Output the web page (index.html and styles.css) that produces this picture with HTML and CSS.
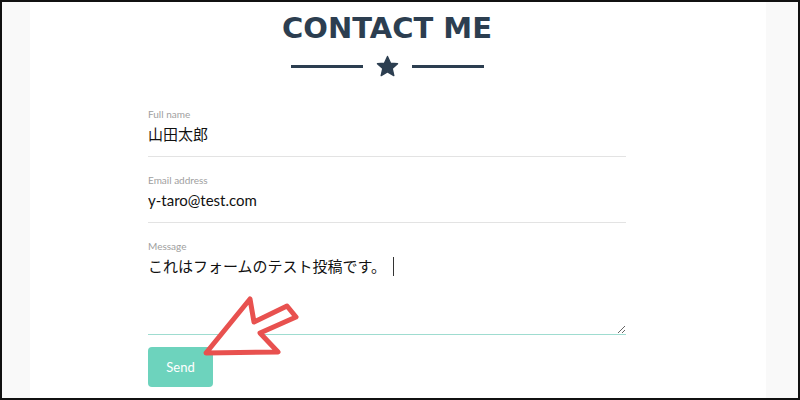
FILE: index.html
```html
<!DOCTYPE html>
<html lang="ja">
<head>
<meta charset="UTF-8" />
<meta name="viewport" content="width=device-width, initial-scale=1" />
<title>Contact Me</title>
<link rel="stylesheet" href="styles.css">
</head>
<body>

<div class="frame">
  <div class="page">
    <div class="contact">
      <h1 class="title">CONTACT ME</h1>

      <div class="divider">
        <span class="divider-line"></span>
        <svg class="divider-star" viewBox="0 0 24 24" width="23" height="23">
          <path d="M12 1.5l3.1 6.9 7.4.7-5.6 5 1.7 7.4L12 17.6l-6.6 3.9 1.7-7.4-5.6-5 7.4-.7z" fill="#2c3e50" stroke="#2c3e50" stroke-width="1.4" stroke-linejoin="round"/>
        </svg>
        <span class="divider-line"></span>
      </div>

      <form class="form" onsubmit="return false">
        <div class="field">
          <label class="field-label" for="name">Full name</label>
          <input class="field-input" id="name" type="text" value="山田太郎">
        </div>

        <div class="field">
          <label class="field-label" for="email">Email address</label>
          <input class="field-input" id="email" type="email" value="y-taro@test.com">
        </div>

        <div class="field field-message">
          <label class="field-label" for="message">Message</label>
          <textarea class="field-input field-textarea" id="message">これはフォームのテスト投稿です。</textarea>
          <span class="caret"></span>
        </div>

        <button class="send-btn" type="submit">Send</button>
      </form>
    </div>
  </div>

  <!-- 注目矢印 -->
  <svg class="arrow" viewBox="0 0 800 400" width="800" height="400">
    <polygon points="206,353 250,299 254,322 287,306 296,317 260,333 278,352"
      fill="#fff" stroke="#e8514f" stroke-width="5" stroke-linejoin="round"/>
  </svg>
</div>

</body>
</html>
```

FILE: styles.css
```css
  body, html {
    margin: 0; padding: 0;
    background: #fff;
    font-family: Lato, "Noto Sans CJK JP", sans-serif;
  }

  .frame {
    position: relative;
    width: 800px;
    height: 400px;
    box-sizing: border-box;
    border: 2px solid #111;
    background: #f9f9f9;
    padding: 0 32px 0 28px;
    overflow: hidden;
  }

  .page {
    height: 100%;
    background: #fff;
  }

  .contact {
    width: 478px;
    margin-left: 118px;
    padding-top: 8px;
  }

  .title {
    margin: 0;
    text-align: center;
    font-family: "DejaVu Sans", sans-serif;
    font-weight: 700;
    font-size: 29px;
    line-height: 36px;
    letter-spacing: 0;
    color: #2c3e50;
  }

  .divider {
    display: flex;
    align-items: center;
    justify-content: center;
    gap: 13px;
    margin-top: 8px;
    height: 24px;
  }

  .divider-line {
    width: 72px;
    height: 3px;
    background: #2c3e50;
  }

  .divider-star {
    display: block;
  }

  .form {
    margin-top: 30px;
  }

  .field {
    position: relative;
    display: flex;
    flex-direction: column;
    border-bottom: 1px solid #e3e3e3;
    padding-bottom: 10px;
    margin-bottom: 17px;
  }

  .field-label {
    font-size: 10px;
    line-height: 12px;
    color: #a0a0a0;
  }

  .field-input {
    border: none;
    outline: none;
    padding: 0;
    margin-top: 2px;
    font-family: Lato, "Noto Sans CJK JP", sans-serif;
    font-size: 15px;
    line-height: 24px;
    height: 24px;
    color: #111;
    background: transparent;
  }

  .field-message {
    border-bottom-color: #9fdcd0;
    padding-bottom: 0;
    margin-bottom: 12px;
  }

  .field-textarea {
    height: 80px;
    resize: vertical;
  }

  .caret {
    position: absolute;
    left: 245px;
    top: 17px;
    width: 1px;
    height: 19px;
    background: #333;
  }

  .send-btn {
    width: 65px;
    height: 40px;
    border: none;
    border-radius: 4px;
    background: #6dd3bd;
    color: #fff;
    font-family: Lato, sans-serif;
    font-size: 13px;
    cursor: pointer;
  }

  .arrow {
    position: absolute;
    top: -2px;
    left: -2px;
    pointer-events: none;
  }
```
